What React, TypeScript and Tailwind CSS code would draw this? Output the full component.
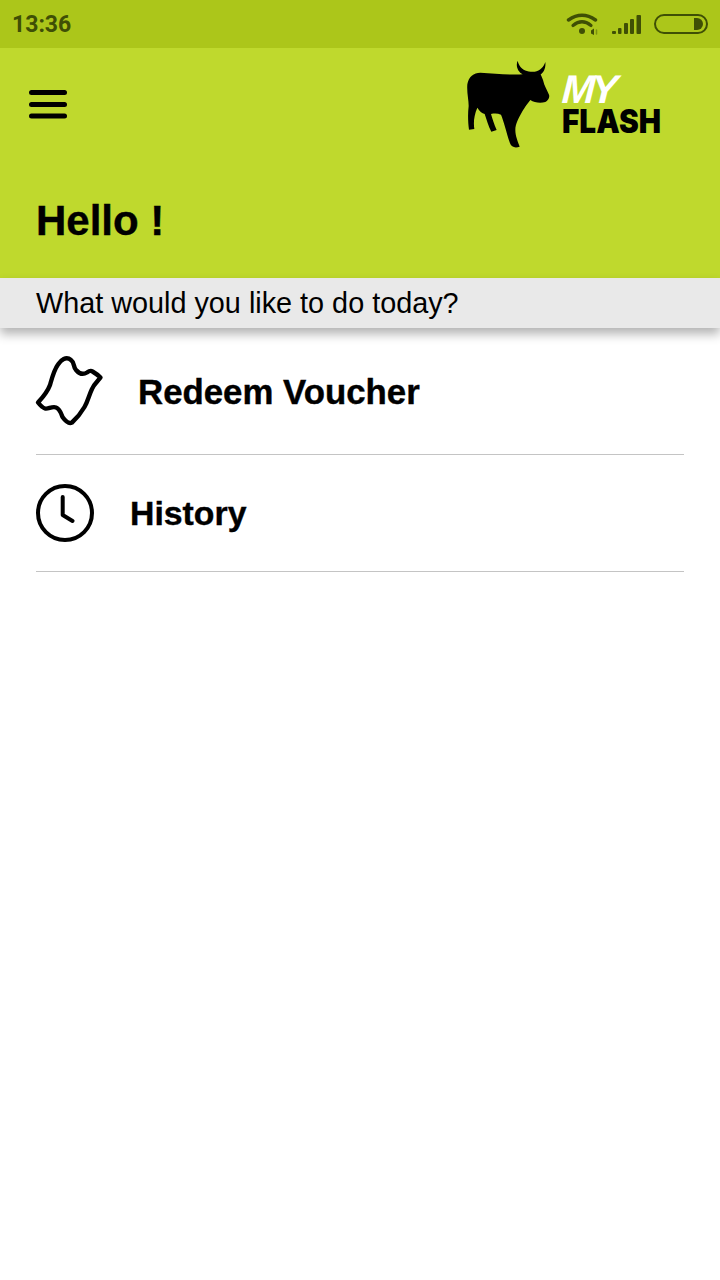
function WifiIcon() {
  return (
    <svg viewBox="0 0 32 22" className="w-[32px] h-[22px]" fill="none" stroke="#3f4f05" strokeLinecap="round">
      <path d="M2.5 7 Q16 -2.5 29.5 7" strokeWidth="3.4" />
      <path d="M7 12.5 Q16 5 25 12.5" strokeWidth="3.2" />
      <circle cx="16" cy="18" r="3" fill="#3f4f05" stroke="none" />
      <path d="M25 17.5 L28 15.5 L28 22 L25 20.5 Z" fill="#3f4f05" stroke="none" />
      <path d="M30.5 17 L30.5 21" strokeWidth="1.5" opacity="0.45" />
    </svg>
  );
}

function SignalIcon() {
  return (
    <svg viewBox="0 0 30 22" className="w-[30px] h-[22px]" fill="#3f4f05">
      <rect x="0" y="18" width="4" height="3" rx="1" />
      <rect x="6" y="15" width="3.5" height="6" rx="1" />
      <rect x="12" y="10" width="4" height="11" rx="1" />
      <rect x="18" y="6" width="4" height="15" rx="1" />
      <rect x="24.5" y="2" width="4.5" height="19" rx="1" />
    </svg>
  );
}

function BatteryIcon() {
  return (
    <div className="w-[54px] h-[20px] rounded-full border-2 border-[#3f4f05] flex items-center justify-end pr-[3px]">
      <div className="w-[9px] h-[12px] bg-[#3f4f05] rounded-r-full" />
    </div>
  );
}

function MenuIcon() {
  return (
    <svg viewBox="0 0 38 29" className="w-[38px] h-[29px]" fill="none" stroke="#000" strokeWidth="5" strokeLinecap="round">
      <path d="M2.5 2.5 H35.5" />
      <path d="M2.5 14.5 H35.5" />
      <path d="M2.5 26 H35.5" />
    </svg>
  );
}

function CowLogo() {
  return (
    <svg viewBox="0 0 300 288" className="w-[100px] h-[96px]" fill="#000">
      <path d="M167 14 C160 30 168 48 182 55 C150 58 100 52 55 50 C35 50 20 62 16 85 C14 110 20 130 20 150 C17 175 18 200 21 221 L37 219 C34 200 36 178 46 155 C52 165 60 172 68 174 C74 192 80 212 88 227 L104 222 C96 205 92 190 87 174 C97 172 108 172 117 176 C125 195 132 225 144 262 C148 274 160 277 173 272 C168 258 160 240 160 222 C160 205 170 185 180 168 C186 158 192 148 205 132 C217 140 235 143 250 138 C258 134 264 125 261 116 C255 102 247 90 243 72 L236 55 C245 50 252 35 250 18 C245 32 235 45 218 47 C200 49 182 42 175 32 C171 26 168 20 167 14 Z" />
    </svg>
  );
}

function VoucherIcon() {
  return (
    <svg viewBox="36 355 70 72" className="w-[70px] h-[72px] overflow-visible" fill="none" stroke="#000" strokeWidth="4.4" strokeLinejoin="round">
      <path d="M38 402.5 C43 397 47 393 50 385 C52 378 54 370 58 364.5 C61 360 66 356 71 360 C75 363 73 367 76 370 C79 373.5 83 375 87 372.5 C89 371 90.5 370 92.5 371.5 C95 373 98 375 100.5 377.5 C98 381 94 384 92 389 C89 395 88 401 84.5 407 C81 413 77 418 72 422.5 C69 424 65 420.5 62.5 417 C61 413 60 409 56 407.5 C52 406 48 409.5 45 408.5 C42 407.5 40 405 38 402.5 Z" />
    </svg>
  );
}

function ClockIcon() {
  return (
    <svg viewBox="0 0 60 60" className="w-[60px] h-[60px]" fill="none" stroke="#000" strokeWidth="4" strokeLinecap="round" strokeLinejoin="round">
      <circle cx="29" cy="30" r="27" />
      <path d="M26.7 14 L26.7 32 L36.5 38" />
    </svg>
  );
}

export default function App() {
  return (
    <div className="w-[720px] h-[1280px] bg-white font-['Liberation_Sans',sans-serif] text-black overflow-hidden">
      {/* Status bar */}
      <div className="h-12 bg-[#acc61a] flex items-center justify-between px-3">
        <span className="font-['Roboto',sans-serif] font-bold text-[23px] leading-none text-[#3f4f05]">13:36</span>
        <div className="flex items-center">
          <WifiIcon />
          <div className="ml-[14px]">
            <SignalIcon />
          </div>
          <div className="ml-[12px]">
            <BatteryIcon />
          </div>
        </div>
      </div>

      {/* Header */}
      <div className="h-[230px] bg-[#bfd92d] px-9 flex flex-col">
        <div className="flex justify-between pt-[8px]">
          <div className="-ml-[7px] mt-[34px]">
            <MenuIcon />
          </div>
          <div className="flex items-start mr-[22px]">
            <CowLogo />
            <div className="w-[100px] mt-[15px] flex flex-col items-start">
              <span className="font-bold italic text-[40px] leading-[36px] text-white -tracking-[4px] -skew-x-3">MY</span>
              <span className="font-['Inter',sans-serif] font-black text-[33px] leading-[28px] origin-left scale-x-[0.9]">FLASH</span>
            </div>
          </div>
        </div>
        <h1 className="mt-[45px] font-bold text-[42px] leading-[48px] [-webkit-text-stroke:0.4px_black]">Hello !</h1>
      </div>

      {/* Subheader */}
      <div className="h-[50px] bg-[#e9e9e9] px-9 flex items-center shadow-[0_6px_10px_rgba(0,0,0,0.3)] relative">
        <p className="text-[28.8px] leading-none">What would you like to do today?</p>
      </div>

      {/* Menu items */}
      <div className="mx-9">
        <div className="h-[127px] flex items-center border-b border-[#c4c4c4]">
          <VoucherIcon />
          <span className="ml-[32px] mt-[3px] font-bold text-[34.8px] [-webkit-text-stroke:0.4px_black]">Redeem Voucher</span>
        </div>
        <div className="h-[117px] flex items-center border-b border-[#c4c4c4]">
          <ClockIcon />
          <span className="ml-[34px] mt-[1px] font-bold text-[33.8px] [-webkit-text-stroke:0.4px_black]">History</span>
        </div>
      </div>
    </div>
  );
}
